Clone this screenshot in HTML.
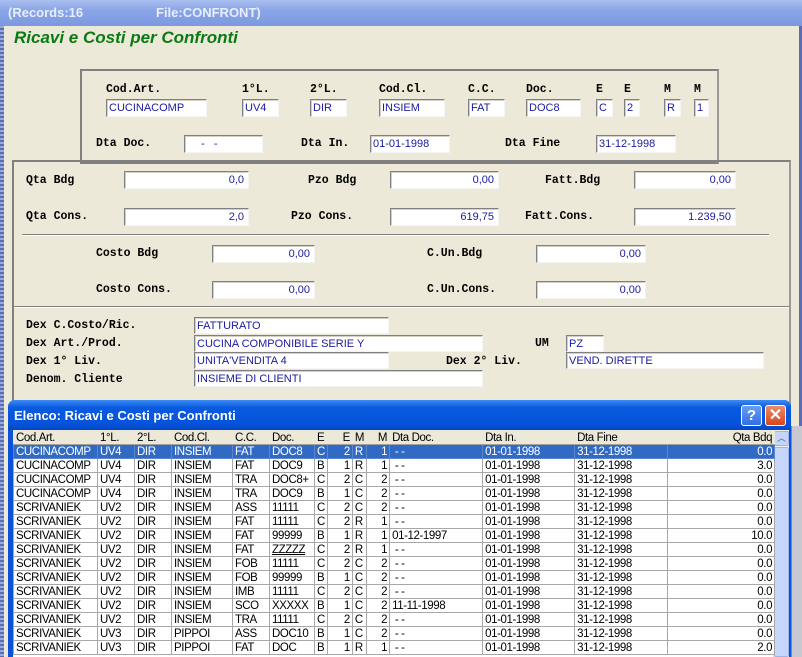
<!DOCTYPE html>
<html style="overflow:hidden"><head><meta charset="utf-8"><style>
*{margin:0;padding:0;box-sizing:border-box}
html,body{width:802px;height:657px;overflow:hidden}
body{background:#7a8fc9;position:relative;font-family:"Liberation Sans",sans-serif}
.a{position:absolute}
.win{left:4px;top:0;width:795px;height:657px;background:#ECE9D8}
.tb{left:0;top:0;width:802px;height:26px;background:linear-gradient(#a9bff0,#8aa5e6 40%,#7c98e0);color:#e8eefc;font-weight:bold;font-size:13px}
.lb{position:absolute;font-family:"Liberation Mono",monospace;font-weight:bold;font-size:11.5px;color:#000;white-space:nowrap}
.in{position:absolute;background:#fff;border-top:1px solid #808080;border-left:1px solid #808080;border-right:1px solid #f4f4f4;border-bottom:1px solid #f4f4f4;height:18px;font-size:11px;color:#1a1aa0;padding:2px 2px 0;white-space:nowrap;overflow:hidden;box-shadow:inset 1px 1px 0 #d4d0c8}
.r{text-align:right;padding-right:4px}
.box{position:absolute;border:2px solid #808080;border-right-color:#9a9a9a}
.hl{position:absolute;height:2px;background:#808080;border-bottom:1px solid #fff}
.lw{left:8px;top:400px;width:783px;height:260px;background:#0b52d8;border-radius:7px 7px 0 0}
.lt{left:8px;top:400px;width:783px;height:30px;border-radius:7px 7px 0 0;background:linear-gradient(#3d8bf5,#0a5ae0 25%,#0553db 80%,#0446c5);color:#fff;font-weight:bold;font-size:13px;padding:8px 0 0 6px}
table{position:absolute;left:13px;top:430px;border-collapse:collapse;table-layout:fixed;background:#fff;font-size:11.5px;letter-spacing:-0.4px}
td{height:14px;border:1px solid #a8a8a8;padding:0 2px;white-space:nowrap;overflow:hidden;line-height:12px;color:#000}
tr.h td{background:#ECE9D8;border-color:#ECE9D8;border-bottom:1px solid #a0a0a0;border-left:1px solid #555;height:14px}
tr.s td{background:#316AC5;color:#fff;border-color:#5b86d0}
.rt{text-align:right}
</style></head><body>
<div class="a win"></div>
<div class="a" style="left:0;top:0;width:4px;height:657px;background:repeating-linear-gradient(#5b6fb0 0 2px,#9aaae0 2px 4px)"></div>
<div class="a tb"><span class="a" style="left:8px;top:5px">(Records:16</span><span class="a" style="left:156px;top:5px">File:CONFRONT)</span></div>
<div class="a" style="left:799px;top:26px;width:3px;height:400px;background:#5a6cb8"></div>
<div class="a" style="left:14px;top:28px;font-size:17px;font-weight:bold;font-style:italic;color:#0a7a14">Ricavi e Costi per Confronti</div>

<div class="box" style="left:80px;top:69px;width:639px;height:95px"></div>
<div class="lb" style="left:106px;top:83px">Cod.Art.</div><div class="in" style="left:106px;top:99px;width:101px">CUCINACOMP</div>
<div class="lb" style="left:242px;top:83px">1°L.</div><div class="in" style="left:242px;top:99px;width:37px">UV4</div>
<div class="lb" style="left:310px;top:83px">2°L.</div><div class="in" style="left:310px;top:99px;width:37px">DIR</div>
<div class="lb" style="left:379px;top:83px">Cod.Cl.</div><div class="in" style="left:379px;top:99px;width:66px">INSIEM</div>
<div class="lb" style="left:468px;top:83px">C.C.</div><div class="in" style="left:468px;top:99px;width:37px">FAT</div>
<div class="lb" style="left:526px;top:83px">Doc.</div><div class="in" style="left:526px;top:99px;width:55px">DOC8</div>
<div class="lb" style="left:596px;top:83px">E</div><div class="in" style="left:596px;top:99px;width:17px">C</div>
<div class="lb" style="left:624px;top:83px">E</div><div class="in" style="left:624px;top:99px;width:16px">2</div>
<div class="lb" style="left:664px;top:83px">M</div><div class="in" style="left:664px;top:99px;width:17px">R</div>
<div class="lb" style="left:694px;top:83px">M</div><div class="in" style="left:694px;top:99px;width:15px">1</div>
<div class="lb" style="left:96px;top:137px">Dta Doc.</div><div class="in" style="left:184px;top:135px;width:79px;padding-left:16px">-&nbsp;&nbsp;&nbsp;-</div>
<div class="lb" style="left:301px;top:137px">Dta In.</div><div class="in" style="left:370px;top:135px;width:80px">01-01-1998</div>
<div class="lb" style="left:505px;top:137px">Dta Fine</div><div class="in" style="left:596px;top:135px;width:80px">31-12-1998</div>

<div class="box" style="left:12px;top:160px;width:779px;height:260px"></div>
<div class="lb" style="left:26px;top:174px">Qta Bdg</div><div class="in r" style="left:124px;top:171px;width:125px">0,0</div>
<div class="lb" style="left:308px;top:174px">Pzo Bdg</div><div class="in r" style="left:390px;top:171px;width:109px">0,00</div>
<div class="lb" style="left:545px;top:174px">Fatt.Bdg</div><div class="in r" style="left:634px;top:171px;width:102px">0,00</div>
<div class="lb" style="left:26px;top:210px">Qta Cons.</div><div class="in r" style="left:124px;top:208px;width:125px">2,0</div>
<div class="lb" style="left:291px;top:210px">Pzo Cons.</div><div class="in r" style="left:390px;top:208px;width:109px">619,75</div>
<div class="lb" style="left:525px;top:210px">Fatt.Cons.</div><div class="in r" style="left:634px;top:208px;width:102px">1.239,50</div>
<div class="hl" style="left:22px;top:234px;width:747px"></div>
<div class="lb" style="left:96px;top:247px">Costo Bdg</div><div class="in r" style="left:212px;top:245px;width:103px">0,00</div>
<div class="lb" style="left:427px;top:247px">C.Un.Bdg</div><div class="in r" style="left:536px;top:245px;width:110px">0,00</div>
<div class="lb" style="left:96px;top:283px">Costo Cons.</div><div class="in r" style="left:212px;top:281px;width:103px">0,00</div>
<div class="lb" style="left:427px;top:283px">C.Un.Cons.</div><div class="in r" style="left:536px;top:281px;width:110px">0,00</div>
<div class="hl" style="left:14px;top:306px;width:775px"></div>
<div class="lb" style="left:26px;top:319px">Dex C.Costo/Ric.</div><div class="in" style="left:194px;top:317px;width:195px;height:17px">FATTURATO</div>
<div class="lb" style="left:26px;top:337px">Dex Art./Prod.</div><div class="in" style="left:194px;top:335px;width:289px;height:17px">CUCINA COMPONIBILE SERIE Y</div>
<div class="lb" style="left:535px;top:337px">UM</div><div class="in" style="left:566px;top:335px;width:38px;height:17px">PZ</div>
<div class="lb" style="left:26px;top:355px">Dex 1° Liv.</div><div class="in" style="left:194px;top:352px;width:195px;height:17px">UNITA'VENDITA 4</div>
<div class="lb" style="left:446px;top:355px">Dex 2° Liv.</div><div class="in" style="left:566px;top:352px;width:198px;height:17px">VEND. DIRETTE</div>
<div class="lb" style="left:26px;top:373px">Denom. Cliente</div><div class="in" style="left:194px;top:370px;width:289px;height:17px">INSIEME DI CLIENTI</div>

<div class="a" style="left:791px;top:426px;width:11px;height:231px;background:#c8c8d0;border-left:1px solid #888"></div>
<div class="a lw" style="height:257px"></div>
<div class="a lt">Elenco: Ricavi e Costi per Confronti</div>
<div class="a" style="left:741px;top:405px;width:21px;height:21px;border:1px solid #fff;border-radius:3px;background:linear-gradient(#6a9cf5,#2f6ee8);color:#fff;font-weight:bold;font-size:15px;text-align:center;line-height:19px">?</div>
<div class="a" style="left:765px;top:405px;width:21px;height:21px;border:1px solid #fff;border-radius:3px;background:linear-gradient(#ee8a68,#d8461e);color:#fff;font-weight:bold;font-size:16px;text-align:center;line-height:19px">✕</div>
<div class="a" style="left:13px;top:430px;width:776px;height:227px;background:#fff"></div>
<div class="a" style="left:773px;top:430px;width:16px;height:227px;background:#f0f0ea;border-left:1px solid #ddd"></div>
<div class="a" style="left:774px;top:431px;width:15px;height:15px;background:#c6d6fb;border:1px solid #9fb5e8;border-radius:2px;color:#4d6185;font-size:9px;text-align:center;line-height:13px">︿</div>
<div class="a" style="left:774px;top:447px;width:15px;height:210px;background:#c6d6fb;border:1px solid #9fb5e8;border-radius:2px"></div>

<table>
<colgroup><col style="width:84px"><col style="width:37px"><col style="width:37px"><col style="width:61px"><col style="width:37px"><col style="width:45px"><col style="width:12px"><col style="width:25px"><col style="width:13px"><col style="width:23px"><col style="width:93px"><col style="width:92px"><col style="width:93px"><col style="width:107px"></colgroup>
<tr class="h"><td style="border-left-color:#ECE9D8">Cod.Art.</td><td>1°L.</td><td>2°L.</td><td>Cod.Cl.</td><td>C.C.</td><td>Doc.</td><td>E</td><td class="rt">E</td><td>M</td><td class="rt">M</td><td>Dta Doc.</td><td>Dta In.</td><td>Dta Fine</td><td class="rt">Qta Bdq</td></tr>
<tr class="s"><td>CUCINACOMP</td><td>UV4</td><td>DIR</td><td>INSIEM</td><td>FAT</td><td>DOC8</td><td>C</td><td class="rt">2</td><td>R</td><td class="rt">1</td><td>&nbsp;- -</td><td>01-01-1998</td><td>31-12-1998</td><td class="rt">0.0</td></tr>
<tr><td>CUCINACOMP</td><td>UV4</td><td>DIR</td><td>INSIEM</td><td>FAT</td><td>DOC9</td><td>B</td><td class="rt">1</td><td>R</td><td class="rt">1</td><td>&nbsp;- -</td><td>01-01-1998</td><td>31-12-1998</td><td class="rt">3.0</td></tr>
<tr><td>CUCINACOMP</td><td>UV4</td><td>DIR</td><td>INSIEM</td><td>TRA</td><td>DOC8+</td><td>C</td><td class="rt">2</td><td>C</td><td class="rt">2</td><td>&nbsp;- -</td><td>01-01-1998</td><td>31-12-1998</td><td class="rt">0.0</td></tr>
<tr><td>CUCINACOMP</td><td>UV4</td><td>DIR</td><td>INSIEM</td><td>TRA</td><td>DOC9</td><td>B</td><td class="rt">1</td><td>C</td><td class="rt">2</td><td>&nbsp;- -</td><td>01-01-1998</td><td>31-12-1998</td><td class="rt">0.0</td></tr>
<tr><td>SCRIVANIEK</td><td>UV2</td><td>DIR</td><td>INSIEM</td><td>ASS</td><td>11111</td><td>C</td><td class="rt">2</td><td>C</td><td class="rt">2</td><td>&nbsp;- -</td><td>01-01-1998</td><td>31-12-1998</td><td class="rt">0.0</td></tr>
<tr><td>SCRIVANIEK</td><td>UV2</td><td>DIR</td><td>INSIEM</td><td>FAT</td><td>11111</td><td>C</td><td class="rt">2</td><td>R</td><td class="rt">1</td><td>&nbsp;- -</td><td>01-01-1998</td><td>31-12-1998</td><td class="rt">0.0</td></tr>
<tr><td>SCRIVANIEK</td><td>UV2</td><td>DIR</td><td>INSIEM</td><td>FAT</td><td>99999</td><td>B</td><td class="rt">1</td><td>R</td><td class="rt">1</td><td>01-12-1997</td><td>01-01-1998</td><td>31-12-1998</td><td class="rt">10.0</td></tr>
<tr><td>SCRIVANIEK</td><td>UV2</td><td>DIR</td><td>INSIEM</td><td>FAT</td><td><u>ZZZZZ</u></td><td>C</td><td class="rt">2</td><td>R</td><td class="rt">1</td><td>&nbsp;- -</td><td>01-01-1998</td><td>31-12-1998</td><td class="rt">0.0</td></tr>
<tr><td>SCRIVANIEK</td><td>UV2</td><td>DIR</td><td>INSIEM</td><td>FOB</td><td>11111</td><td>C</td><td class="rt">2</td><td>C</td><td class="rt">2</td><td>&nbsp;- -</td><td>01-01-1998</td><td>31-12-1998</td><td class="rt">0.0</td></tr>
<tr><td>SCRIVANIEK</td><td>UV2</td><td>DIR</td><td>INSIEM</td><td>FOB</td><td>99999</td><td>B</td><td class="rt">1</td><td>C</td><td class="rt">2</td><td>&nbsp;- -</td><td>01-01-1998</td><td>31-12-1998</td><td class="rt">0.0</td></tr>
<tr><td>SCRIVANIEK</td><td>UV2</td><td>DIR</td><td>INSIEM</td><td>IMB</td><td>11111</td><td>C</td><td class="rt">2</td><td>C</td><td class="rt">2</td><td>&nbsp;- -</td><td>01-01-1998</td><td>31-12-1998</td><td class="rt">0.0</td></tr>
<tr><td>SCRIVANIEK</td><td>UV2</td><td>DIR</td><td>INSIEM</td><td>SCO</td><td>XXXXX</td><td>B</td><td class="rt">1</td><td>C</td><td class="rt">2</td><td>11-11-1998</td><td>01-01-1998</td><td>31-12-1998</td><td class="rt">0.0</td></tr>
<tr><td>SCRIVANIEK</td><td>UV2</td><td>DIR</td><td>INSIEM</td><td>TRA</td><td>11111</td><td>C</td><td class="rt">2</td><td>C</td><td class="rt">2</td><td>&nbsp;- -</td><td>01-01-1998</td><td>31-12-1998</td><td class="rt">0.0</td></tr>
<tr><td>SCRIVANIEK</td><td>UV3</td><td>DIR</td><td>PIPPOI</td><td>ASS</td><td>DOC10</td><td>B</td><td class="rt">1</td><td>C</td><td class="rt">2</td><td>&nbsp;- -</td><td>01-01-1998</td><td>31-12-1998</td><td class="rt">0.0</td></tr>
<tr><td>SCRIVANIEK</td><td>UV3</td><td>DIR</td><td>PIPPOI</td><td>FAT</td><td>DOC</td><td>B</td><td class="rt">1</td><td>R</td><td class="rt">1</td><td>&nbsp;- -</td><td>01-01-1998</td><td>31-12-1998</td><td class="rt">2.0</td></tr>
</table>
</body></html>
